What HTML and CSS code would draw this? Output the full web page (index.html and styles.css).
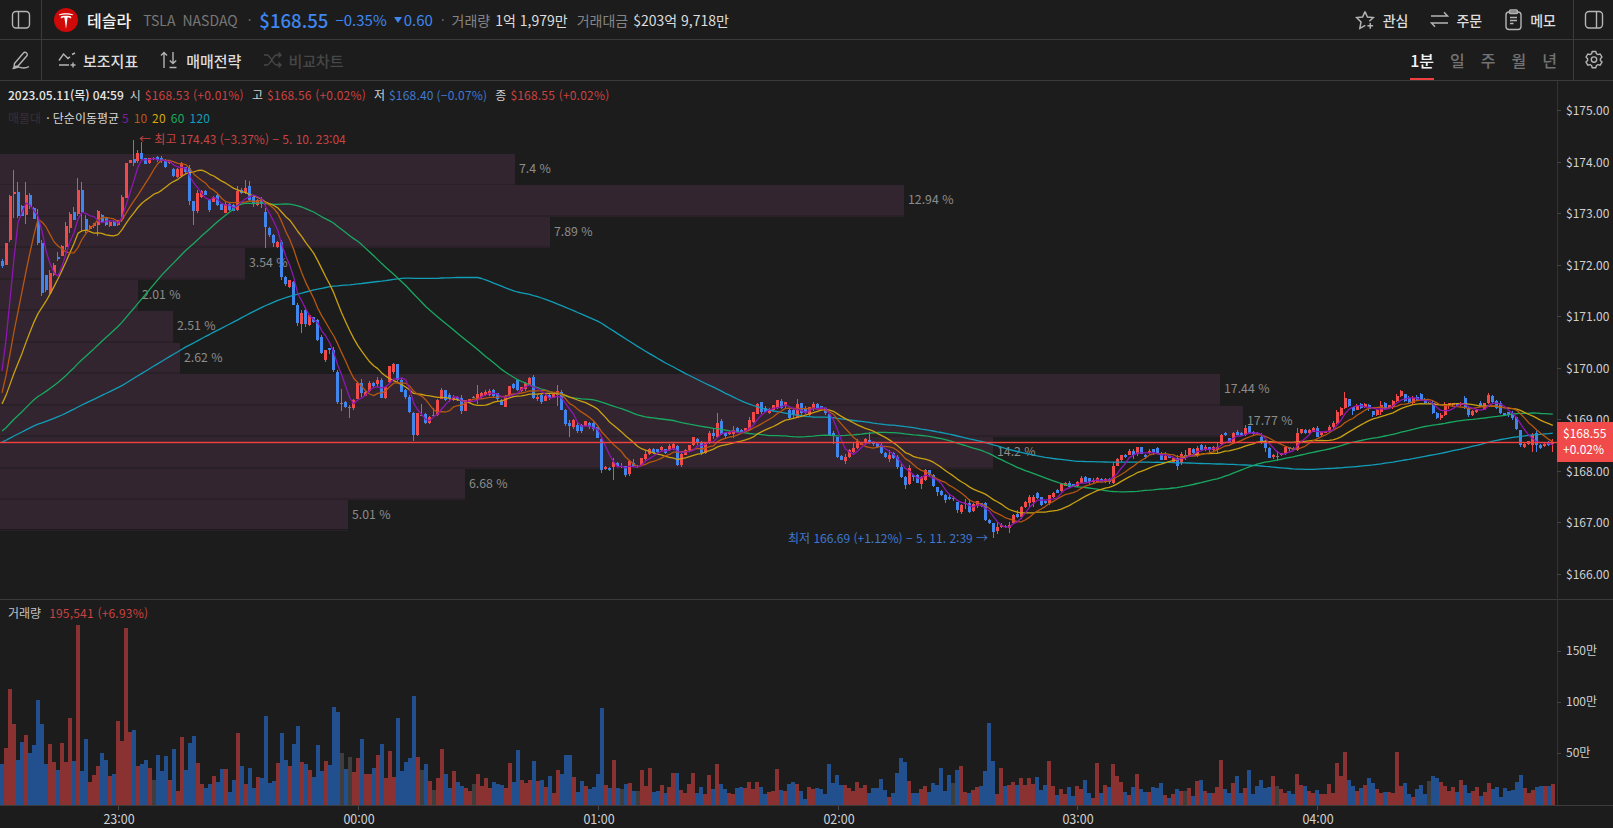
FILE: index.html
```html
<!DOCTYPE html>
<html lang="ko">
<head>
<meta charset="utf-8">
<title>테슬라 TSLA</title>
<link rel="stylesheet" href="styles.css">
</head>
<body>
<div class="app">
  <header class="bar topbar">
    <button class="cell cell-left" aria-label="패널">
      <svg class="ico" width="20" height="20" viewBox="0 0 20 20"><rect x="1.5" y="1.5" width="17" height="16.5" rx="3.5"/><path d="M7.5 1.5V18"/></svg>
    </button>
    <svg class="logo" width="24" height="24" viewBox="0 0 24 24"><circle cx="12" cy="12" r="12" fill="#cf0808"/><path fill="#fff" d="M12 21 13.6 9.6C15.2 9.6 16.2 9.8 17 10.8 17.6 9.1 17.2 8.3 15.6 8 14.6 7.8 13 7.7 12 7.7S9.4 7.8 8.4 8C6.8 8.3 6.4 9.1 7 10.8 7.8 9.8 8.8 9.6 10.4 9.6ZM4.8 6.4C9 4.9 15 4.9 19.2 6.4L18.7 7.2C15 6.2 9 6.2 5.3 7.2Z"/></svg>
    <strong class="name">테슬라</strong>
    <span class="ticker">TSLA</span>
    <span class="market">NASDAQ</span>
    <span class="dot dot-a">·</span>
    <span class="price">$168.55</span>
    <span class="change">−0.35%</span>
    <span class="delta"><i class="tri"></i>0.60</span>
    <span class="dot dot-b">·</span>
    <span class="stat-label">거래량</span>
    <span class="stat-value">1억 1,979만</span>
    <span class="stat-label stat-gap">거래대금</span>
    <span class="stat-value">$203억 9,718만</span>
    <nav class="actions">
      <a class="action action-star">
        <svg class="ico" width="20" height="20" viewBox="0 0 19 19"><path d="M9.5 1.5 11.8 6.6 17.4 7.2 13.6 10.7M9.8 14.6 4.6 17.4 5.7 11.4 1.5 7.2 7.2 6.6 9.5 1.5M14.5 12.3v5.4M11.8 15h5.4"/></svg>
        <span>관심</span>
      </a>
      <a class="action">
        <svg class="ico" width="19" height="19" viewBox="0 0 19 19"><path d="M1 6H17.5L14 2.2M18 13H1.5L5 16.8"/></svg>
        <span>주문</span>
      </a>
      <a class="action">
        <svg class="ico" width="19" height="22" viewBox="0 0 18 22"><rect x="1.5" y="3" width="15" height="17.5" rx="3"/><rect x="5" y="1" width="8" height="3.6" rx="1.2"/><path d="M5.5 8.5h7M5.5 11.5h7M5.5 14.5h3.5"/></svg>
        <span>메모</span>
      </a>
    </nav>
    <button class="cell cell-right" aria-label="패널">
      <svg class="ico" width="20" height="20" viewBox="0 0 20 20"><rect x="1.5" y="1.5" width="17" height="16.5" rx="3.5"/><path d="M12.5 1.5V18"/></svg>
    </button>
  </header>

  <div class="bar toolbar">
    <button class="cell cell-left" aria-label="그리기">
      <svg class="ico" width="20" height="20" viewBox="0 0 20 20"><path d="M3.5 13.5 12.2 3.2C13 2.2 14.4 2 15.4 2.8S16.5 5 15.7 6L7 16 3 16.8ZM1.5 18.5C5 18.5 6.5 16.5 9 17.3 11.5 18.2 14 18.8 18 16.5"/></svg>
    </button>
    <a class="tool tool-first">
      <svg class="ico" width="19" height="16" viewBox="0 0 19 16"><path d="M1 8.5 5.5 2 10 6.5 12 4.8M14 2.5l3-1.5M1 13H11M15 10.5v5M12.5 13h5"/></svg>
      <span>보조지표</span>
    </a>
    <a class="tool tool-second">
      <svg class="ico" width="20" height="18" viewBox="0 0 20 18"><path d="M4 17V1.5M1 4.5 4 1.5 7 4.5M13 1V12.5M9.8 9.5 13 12.5 16.2 9.5M9.5 16.5H16.5"/></svg>
      <span>매매전략</span>
    </a>
    <a class="tool tool-off">
      <svg class="ico" width="19" height="16" viewBox="0 0 19 16"><path d="M1 3H4C7.5 3 10 13 13.5 13H18M15.5 10.5 18 13 15.5 15.5M1 13H4C7.5 13 10 3 13.5 3H18M15.5 .5 18 3 15.5 5.5"/></svg>
      <span>비교차트</span>
    </a>
    <nav class="periods">
      <a class="period on">1분</a>
      <a class="period">일</a>
      <a class="period">주</a>
      <a class="period">월</a>
      <a class="period">년</a>
    </nav>
    <button class="cell cell-right" aria-label="설정">
      <svg class="ico" width="18" height="20" viewBox="0 0 18 20"><path stroke-linejoin="round" d="M7.2 1.5h3.6l.6 2.2 1.6.9 2.2-.6 1.8 3.1-1.6 1.6v1.8l1.6 1.6-1.8 3.1-2.2-.6-1.6.9-.6 2.2H7.2l-.6-2.2-1.6-.9-2.2.6L1 12.1l1.6-1.6V8.7L1 7.1l1.8-3.1 2.2.6 1.6-.9z"/><circle cx="9" cy="9.6" r="2.7"/></svg>
    </button>
  </div>

  <main class="chart">
    <section class="pane price-pane">
      <svg id="priceChart" class="plot" viewBox="0 81 1613 519" preserveAspectRatio="none"></svg>
      <div class="legend legend-ohlc">
        <span class="date">2023.05.11(목) 04:59</span>
        <span class="lk">시</span><span class="up">$168.53 (+0.01%)</span>
        <span class="lk">고</span><span class="up">$168.56 (+0.02%)</span>
        <span class="lk">저</span><span class="down">$168.40 (−0.07%)</span>
        <span class="lk">종</span><span class="up">$168.55 (+0.02%)</span>
      </div>
      <div class="legend legend-ma">
        <span class="vp">매물대</span>
        <span class="ma-name">· 단순이동평균</span>
        <span class="m5">5</span><span class="m10">10</span><span class="m20">20</span><span class="m60">60</span><span class="m120">120</span>
      </div>
    </section>
    <section class="pane volume-pane">
      <svg id="volumeChart" class="plot" viewBox="0 600 1613 205" preserveAspectRatio="none"></svg>
      <div class="legend legend-vol">
        <span class="vol-name">거래량</span>
        <span class="up">195,541 (+6.93%)</span>
      </div>
    </section>
    <div class="time-axis" id="timeAxis"></div>
  </main>
</div>
<script src="app.js"></script>
</body>
</html>
```

FILE: styles.css
```css
* { box-sizing: border-box; }
html, body { margin: 0; height: 100%; }
body {
  background: #1c1c1c;
  color: #ddd;
  font-family: "Noto Sans CJK KR", "Noto Sans", sans-serif;
  overflow: hidden;
}
.app { display: flex; flex-direction: column; height: 828px; width: 1613px; }
.bar { display: flex; align-items: center; border-bottom: 1px solid #3b3b3b; flex: none; }
.topbar { height: 40px; }
.toolbar { height: 41px; }
.cell {
  display: flex; align-items: center; justify-content: center;
  height: 100%; background: none; border: 0; padding: 0; flex: none;
}
.cell-left { width: 42px; border-right: 1px solid #3b3b3b; }
.cell-right { width: 40px; border-left: 1px solid #3b3b3b; }
.ico { fill: none; stroke: #b4b4b4; stroke-width: 1.4; flex: none; }

.logo { margin-left: 12px; flex: none; }
.name { margin-left: 9px; font-size: 16px; font-weight: 500; color: #f2f2f2; }
.ticker { margin-left: 12px; font-size: 14px; color: #777; }
.market { margin-left: 7px; font-size: 14px; color: #777; }
.dot { color: #777; font-size: 13px; }
.dot-a { margin-left: 10px; }
.price { margin-left: 8px; font-size: 18.6px; font-weight: 500; color: #3f86ee; }
.change { margin-left: 7px; font-size: 15px; color: #3f86ee; }
.delta { margin-left: 7px; font-size: 15px; color: #3f86ee; display: flex; align-items: center; }
.tri {
  display: inline-block; width: 0; height: 0; margin-right: 2px;
  border-left: 4.5px solid transparent; border-right: 4.5px solid transparent; border-top: 6px solid #3f86ee;
}
.dot-b { margin-left: 8px; }
.stat-label { margin-left: 7px; font-size: 14px; color: #858585; }
.stat-gap { margin-left: 9px; }
.stat-value { margin-left: 5px; font-size: 14px; color: #ddd; }

.actions { margin-left: auto; display: flex; align-items: center; gap: 22px; padding-right: 17px; }
.action { display: flex; align-items: center; gap: 7px; font-size: 14px; font-weight: 500; color: #ddd; }
.action-star { gap: 8px; }

.tool { display: flex; align-items: center; gap: 6px; font-size: 15px; font-weight: 500; color: #ddd; }
.tool-first { margin-left: 16px; }
.tool-second { margin-left: 22px; }
.tool-off { margin-left: 22px; color: #474747; }
.tool-off .ico { stroke: #474747; }

.periods { margin-left: auto; display: flex; height: 100%; gap: 16px; padding-right: 16px; }
.period {
  display: flex; align-items: center; height: 100%;
  font-size: 16px; font-weight: 500; color: #737373;
  border-bottom: 2px solid transparent; margin-bottom: -1px; padding-top: 1px;
}
.period.on { color: #f4f4f4; border-bottom-color: #ee4040; }

.chart { flex: 1; display: flex; flex-direction: column; min-height: 0; }
.pane { position: relative; flex: none; border-bottom: 1px solid #3b3b3b; }
.price-pane { height: 519px; }
.volume-pane { height: 206px; }
.plot { display: block; width: 1613px; }
.price-pane .plot { height: 519px; }
.volume-pane .plot { height: 205px; }
.time-axis { position: relative; flex: 1; }
.time-label {
  position: absolute; top: 5px; width: 60px; text-align: center;
  font-size: 12.5px; line-height: 16px; color: #d2d2d2;
}
.time-tick { position: absolute; top: 0; width: 1px; height: 4px; background: #4a4a4a; }

.legend {
  position: absolute; left: 8px; display: flex; align-items: center;
  font-size: 12px; line-height: 16px; white-space: nowrap;
}
.legend-ohlc { top: 6px; }
.legend-ma { top: 29px; }
.legend-vol { top: 5px; }
.date { color: #e6e6e6; font-weight: 500; margin-right: -2px; }
.lk { margin: 0 4px 0 8px; color: #cfcfcf; }
.up, .down { letter-spacing: .2px; }
.up { color: #c94343; }
.down { color: #3f78cf; }
.vp { color: #3a2e39; }
.ma-name { margin: 0 3px 0 5px; color: #d8d8d8; }
.m5 { color: #7d1fa3; margin-right: 5px; }
.m10 { color: #b8581a; margin-right: 5px; }
.m20 { color: #d4a80f; margin-right: 5px; letter-spacing: .2px; }
.m60 { color: #18ab5f; margin-right: 5px; letter-spacing: .2px; }
.m120 { color: #119db8; letter-spacing: .2px; }
.vol-name { color: #c4c4c4; margin-right: 8px; }

.axis-text { font-size: 12px; fill: #cfcfcf; font-family: "Noto Sans CJK KR", "Noto Sans", sans-serif; }
.vp-text { font-size: 12.3px; fill: #8c8c8c; font-family: "Noto Sans CJK KR", "Noto Sans", sans-serif; }
.note-hi { font-size: 12px; fill: #c94343; font-family: "Noto Sans CJK KR", "Noto Sans", sans-serif; }
.note-lo { font-size: 12px; fill: #3f78cf; font-family: "Noto Sans CJK KR", "Noto Sans", sans-serif; }
.tag-text { font-size: 12px; fill: #fff; font-family: "Noto Sans CJK KR", "Noto Sans", sans-serif; }
```

FILE: app.js
```js
var NS = "http://www.w3.org/2000/svg";
var STEP = 3.997;

var BODIES = "261,266 243,265 196,240 192,194 192,216 206,216 195,215 195,207 208,219 220,243 243,293 275,290 273,293 265,275 257,259 246,256 226,247 214,228 212,220 190,214 190,212 219,231 226,229 223,226 211,225 215,222 218,225 222,226 221,226 220,225 197,219 163,198 160,163 159,163 153,161 153,159 158,164 158,163 158,159 157,160 158,161 160,167 162,163 169,176 169,177 163,176 167,172 168,201 201,211 193,211 191,197 191,195 200,210 197,202 195,205 204,210 204,213 204,210 205,211 191,210 190,193 188,193 186,200 197,203 200,205 200,204 212,227 228,235 235,243 242,247 242,277 277,284 280,287 282,305 305,323 313,324 310,324 315,325 317,322 320,340 337,353 350,360 348,350 350,370 372,402 403,404 402,407 407,408 400,408 383,399 383,393 392,396 383,391 383,386 380,384 380,398 387,398 366,382 364,372 364,380 380,392 390,397 397,412 413,435 413,435 415,416 414,423 417,423 415,416 400,415 390,399 "
 + "390,400 395,398 397,400 397,400 398,411 400,411 399,403 397,398 394,400 393,397 392,395 391,395 390,396 393,399 400,405 396,407 386,395 384,388 380,390 387,391 383,389 378,385 377,398 397,399 395,402 396,401 395,398 394,398 391,395 392,410 410,424 423,426 420,427 425,431 425,431 421,426 423,427 423,429 427,438 439,470 467,469 468,470 462,467 463,466 466,467 466,475 461,474 463,466 466,467 458,465 454,459 449,454 449,453 449,452 447,450 449,453 446,450 444,449 446,465 454,465 450,455 445,450 437,445 439,443 443,453 443,453 433,443 433,436 423,437 421,434 433,436 432,434 430,434 428,432 430,433 428,431 420,430 412,422 404,414 402,412 408,412 409,413 405,410 400,408 401,408 402,406 410,418 410,415 404,417 403,413 408,413 407,415 404,408 404,408 406,408 408,413 414,435 433,436 437,457 456,460 457,461 450,457 448,452 441,448 442,445 439,443 440,443 442,444 443,447 445,453 453,457 455,459 453,458 457,467 467,477 477,485 468,484 475,477 475,483 477,484 470,480 470,475 475,486 487,492 491,495 495,500 497,499 498,499 502,510 505,512 503,504 503,512 504,511 501,506 503,506 503,520 520,523 523,532 527,531 525,527 526,527 525,528 515,523 514,517 507,517 502,507 497,503 497,502 493,498 497,505 501,503 495,503 493,497 490,493 483,491 483,486 483,487 484,486 482,486 478,483 477,482 478,482 480,482 478,482 479,482 479,482 479,482 466,483 459,466 455,460 455,457 451,455 451,455 447,454 447,454 455,457 451,453 449,453 448,453 454,460 456,460 456,458 458,462 458,466 454,463 455,456 448,456 449,453 448,456 "
 + "445,450 447,450 447,450 447,450 447,450 435,444 433,435 438,442 433,443 432,435 433,435 428,435 426,433 432,434 433,434 437,442 442,448 448,458 455,457 456,457 453,455 447,453 447,449 448,450 433,450 429,433 430,433 430,433 428,432 428,437 432,435 431,433 427,431 423,427 412,423 408,415 398,408 399,406 407,411 405,410 404,408 404,407 405,409 411,415 410,415 405,412 403,408 405,407 401,407 396,401 391,396 394,401 398,402 398,403 397,400 394,400 399,403 403,404 403,413 413,418 415,418 404,415 403,405 403,405 403,405 403,405 398,408 408,415 411,415 410,412 403,407 403,410 395,403 396,402 401,408 403,413 413,415 412,415 413,418 417,429 430,445 444,447 441,444 435,445 433,445 445,448 444,446 443,445 443,444";

/* colour letter + top of the bar, in 1/3 px above a baseline */
var VOL_A = "b548 r502 r325 r430 b538 b482 r463 b517 b493 b358 b430 b550 r490 r544 b568 r487 r544 r412 b541 r133 b571 b475 r604 r583 r556 b517 b538 r586 b580 r421 r481 r142 r454 b448 r556 b550 b538 r562 g598 b523 b571 b526 r598 b505 r631 r469 b568 b487 b466 r547 r610 b622 b610 r586 b604 b565 r565 b634 b598 r457 b556 r610 b562 b622 r589 b592 b406 b607 b601 r547 b457 b538 r556 b490 b436 r544 b550 r568 b589 b493 b571 r541 b553 b379 b394 g517 b565 g529 r574 r532 b475 r580 r580 b562 r523 b490 r592 r511 r589 b412 b571 b544 b532";
var VOL_B = "b45 r229 g268 b250 r301 g328 r292 r205 b280 b322 r271 b304 b316 r322 r331 g310 r280 r316 r292 r322 b304 b310 b313 r322 r247 b304 b208 r298 r307 r298 b241 r301 b298 r319 b286 r337 r268 b280 b223 b223 r289 b334 b301 r316 b325 b319 b280 b82 r313 b322 r238 b322 g325 b310 r307 b331 g331 r268 r316 r262 b334 b331 r313 b337 r319 r277 b277 r328 r337 r310 r277 b337 b319 r340 r283 b325 r250 b310 b325 r337 r340 b322 b319 r322 r304 r325 r304 b319 b340 r334 r331 r265 b328 r331 b310 b304 r310 b331 b355 r319 r325 b322 b325 b340 b250 b307 b283 b313 r313 r322 r331 r304 r322 r313 b337 b322 b322 b295 b328 r349 b337 b277 b232 b244 r301 b337 b337 r325 r316 b334 b307 b313 b262 b331 b283 g307 b268 r256 r334 b337 r328 r319 b316 b271 b127 b241 r340 r262 b316 r313 r304 b313 r292 r313 r292 r310 b289 b328 b313 r241 r316 b343 r325 r340 b319 b346 r316 r325 b298 b337 r352 r247 b337 r313 b319 r250 r286 r304 b334 r343 b319 r280 b325 b334 r334";
var VOL_C = "b619 b622 b607 r643 b652 r640 b625 r631 g631 r622 b646 r601 b598 r631 b637 r637 r619 r538 b625 b637 r607 b586 b637 r622 b568 b640 b616 b598 b622 b619 r586 g616 r625 r637 b631 b640 r580 r613 b616 r631 r637 b628 r640 r640 r610 r637 r547 r586 r514 b598 b616 r631 b622 r613 b592 b607 r625 r637 b634 r634 r637 r514 r616 b607 b640 r649 b625 b613 b640 g601 b586 b592 r604 r616 r631 r619 b634 r598 b613 b637 r631 r619 b646 r634 r607 b625 b619 b649 b622 b631 b628 b604 b583 r622 r637 r628 b619 b616 r616 b616 r610";

var WICKS = { 3:[170,218], 4:[182,218], 6:[182,224], 9:[209,245], 10:[240,296], 12:[270,295], 16:[222,250], 19:[178,216], 20:[182,232], 24:[210,236], 33:[140,166], 34:[150,163], 35:[142,160], 47:[165,205], 48:[201,225], 49:[190,213], 59:[186,211], 61:[180,194], 62:[181,202], 66:[208,248], 70:[240,280], 74:[303,326], 75:[310,333], 84:[370,404], 85:[389,411], 87:[405,418], 103:[412,441], 105:[404,416], 108:[408,416], 119:[385,404], 133:[375,399], 139:[385,406], 142:[420,437], 150:[438,473], 153:[458,480], 169:[445,466], 179:[413,438], 199:[399,418], 207:[413,436], 208:[431,444], 217:[432,444], 227:[465,485], 233:[474,487], 248:[523,538], 254:[510,518], 278:[462,484], 296:[450,460], 319:[451,461], 324:[428,451], 334:[410,424], 336:[392,409], 380:[430,447], 383:[433,452], 384:[431,452], 388:[439,452] };

function el(parent, name, attrs, text) {
  var n = document.createElementNS(NS, name);
  for (var k in attrs) n.setAttribute(k, attrs[k]);
  if (text !== undefined) n.textContent = text;
  parent.appendChild(n);
  return n;
}

var seed = 12345;
function rnd() { seed = (seed * 16807) % 2147483647; return seed / 2147483647; }

function parseVol() {
  var out = [];
  VOL_A.split(" ").forEach(function (s) { out.push({ c: s[0], h: (672 - +s.slice(1)) / 3 }); });
  VOL_B.split(" ").forEach(function (s) { out.push({ c: s[0], h: (372 - +s.slice(1)) / 3 }); });
  VOL_C.split(" ").forEach(function (s) { out.push({ c: s[0], h: (672 - +s.slice(1)) / 3 }); });
  return out;
}

var vols = parseVol();
var bodies = BODIES.split(" ").map(function (s) { var p = s.split(","); return [+p[0], +p[1]]; });
var closes = bodies.map(function (b, i) {
  var c = vols[i] ? vols[i].c : "r";
  return c === "b" ? b[1] : b[0];
});

function history(k) { /* k candles before the first */
  if (k <= 4) return 397;
  if (k <= 19) return 415;
  if (k <= 59) return 444.6;
  return 453;
}
function sma(n) {
  var pts = [];
  for (var i = 0; i < closes.length; i++) {
    var sum = 0;
    for (var j = i - n + 1; j <= i; j++) sum += j >= 0 ? closes[j] : history(-j);
    pts.push((STEP * i + 2).toFixed(1) + "," + (sum / n).toFixed(1));
  }
  return pts.join(" ");
}

var COL = { r: "#f04a4a", b: "#4186ec", g: "#7d7d7d" };
var VCOL = { r: "#8a3131", b: "#22508f", g: "#3e3e3e" };

/* price pane */
var P = document.getElementById("priceChart");
var rows = [["7.4 %", 515], ["12.94 %", 904], ["7.89 %", 550], ["3.54 %", 245], ["2.01 %", 138], ["2.51 %", 173], ["2.62 %", 180], ["17.44 %", 1220], ["17.77 %", 1243], ["14.2 %", 993], ["6.68 %", 465], ["5.01 %", 348]];
rows.forEach(function (r, i) {
  var y = 154 + i * 31.45;
  el(P, "rect", { x: 0, y: y.toFixed(1), width: r[1], height: 29.5, fill: "#32252f", "shape-rendering": "crispEdges" });
  el(P, "rect", { x: 0, y: (y + 29.5).toFixed(1), width: r[1], height: 1.95, fill: "#2a2028", "shape-rendering": "crispEdges" });
  el(P, "text", { x: r[1] + 4, y: (y + 19).toFixed(1), "class": "vp-text" }, r[0]);
});

bodies.forEach(function (b, i) {
  var c = COL[vols[i] ? vols[i].c : "r"];
  var x = STEP * i;
  var w = WICKS[i];
  var top, bot;
  if (w) { top = w[0]; bot = w[1]; }
  else {
    var big = rnd() > 0.8 ? 5 : 2;
    top = b[0] - rnd() * big;
    bot = b[1] + rnd() * big;
  }
  el(P, "rect", { x: Math.round(x + 1.5), y: top.toFixed(1), width: 1, height: (bot - top).toFixed(1), fill: c, "shape-rendering": "crispEdges" });
  el(P, "rect", { x: Math.round(x + 0.6), y: b[0], width: 3, height: Math.max(1, b[1] - b[0]), fill: c, "shape-rendering": "crispEdges" });
});

[[120, "#119db8"], [60, "#18a860"], [20, "#c9a010"], [10, "#b8560f"], [5, "#8f17b4"]].forEach(function (m) {
  el(P, "polyline", { points: sma(m[0]), fill: "none", stroke: m[1], "stroke-width": 1.3, "stroke-linejoin": "round" });
});

el(P, "text", { x: 139, y: 144, "class": "note-hi" }, "←  최고 174.43 (−3.37%) − 5. 10. 23:04");
el(P, "text", { x: 788, y: 543, "class": "note-lo" }, "최저 166.69 (+1.12%) − 5. 11. 2:39  →");

/* price line and axis */
el(P, "rect", { x: 1557, y: 81, width: 1, height: 519, fill: "#333", "shape-rendering": "crispEdges" });
for (var p = 175, k = 0; p >= 166; p--, k++) {
  var y = 110 + k * 51.55;
  el(P, "rect", { x: 1557, y: Math.round(y), width: 4, height: 1, fill: "#444", "shape-rendering": "crispEdges" });
  el(P, "text", { x: 1566, y: (y + 5).toFixed(1), "class": "axis-text" }, "$" + p + ".00");
}
el(P, "rect", { x: 0, y: 441.8, width: 1557, height: 1.4, fill: "#f04040" });
el(P, "rect", { x: 1557, y: 422, width: 56, height: 40, fill: "#f04a4a", "shape-rendering": "crispEdges" });
el(P, "text", { x: 1563, y: 438, "class": "tag-text" }, "$168.55");
el(P, "text", { x: 1563, y: 454, "class": "tag-text" }, "+0.02%");

/* volume pane */
var V = document.getElementById("volumeChart");
vols.forEach(function (v, i) {
  var x = Math.round(STEP * i);
  el(V, "rect", { x: x, y: (804 - v.h + 1).toFixed(1), width: Math.round(STEP * (i + 1)) - x, height: v.h.toFixed(1), fill: VCOL[v.c], "shape-rendering": "crispEdges" });
});
el(V, "rect", { x: 1557, y: 600, width: 1, height: 205, fill: "#333", "shape-rendering": "crispEdges" });
[["150만", 651], ["100만", 702], ["50만", 753]].forEach(function (t) {
  el(V, "rect", { x: 1557, y: t[1], width: 4, height: 1, fill: "#444", "shape-rendering": "crispEdges" });
  el(V, "text", { x: 1566, y: t[1] + 4, "class": "axis-text" }, t[0]);
});

/* time axis */
var T = document.getElementById("timeAxis");
[["23:00", 119], ["00:00", 359], ["01:00", 599], ["02:00", 839], ["03:00", 1078], ["04:00", 1318]].forEach(function (t) {
  var tick = document.createElement("span");
  tick.className = "time-tick";
  tick.style.left = (t[1] - 1) + "px";
  T.appendChild(tick);
  var lab = document.createElement("span");
  lab.className = "time-label";
  lab.style.left = (t[1] - 30) + "px";
  lab.textContent = t[0];
  T.appendChild(lab);
});
```
